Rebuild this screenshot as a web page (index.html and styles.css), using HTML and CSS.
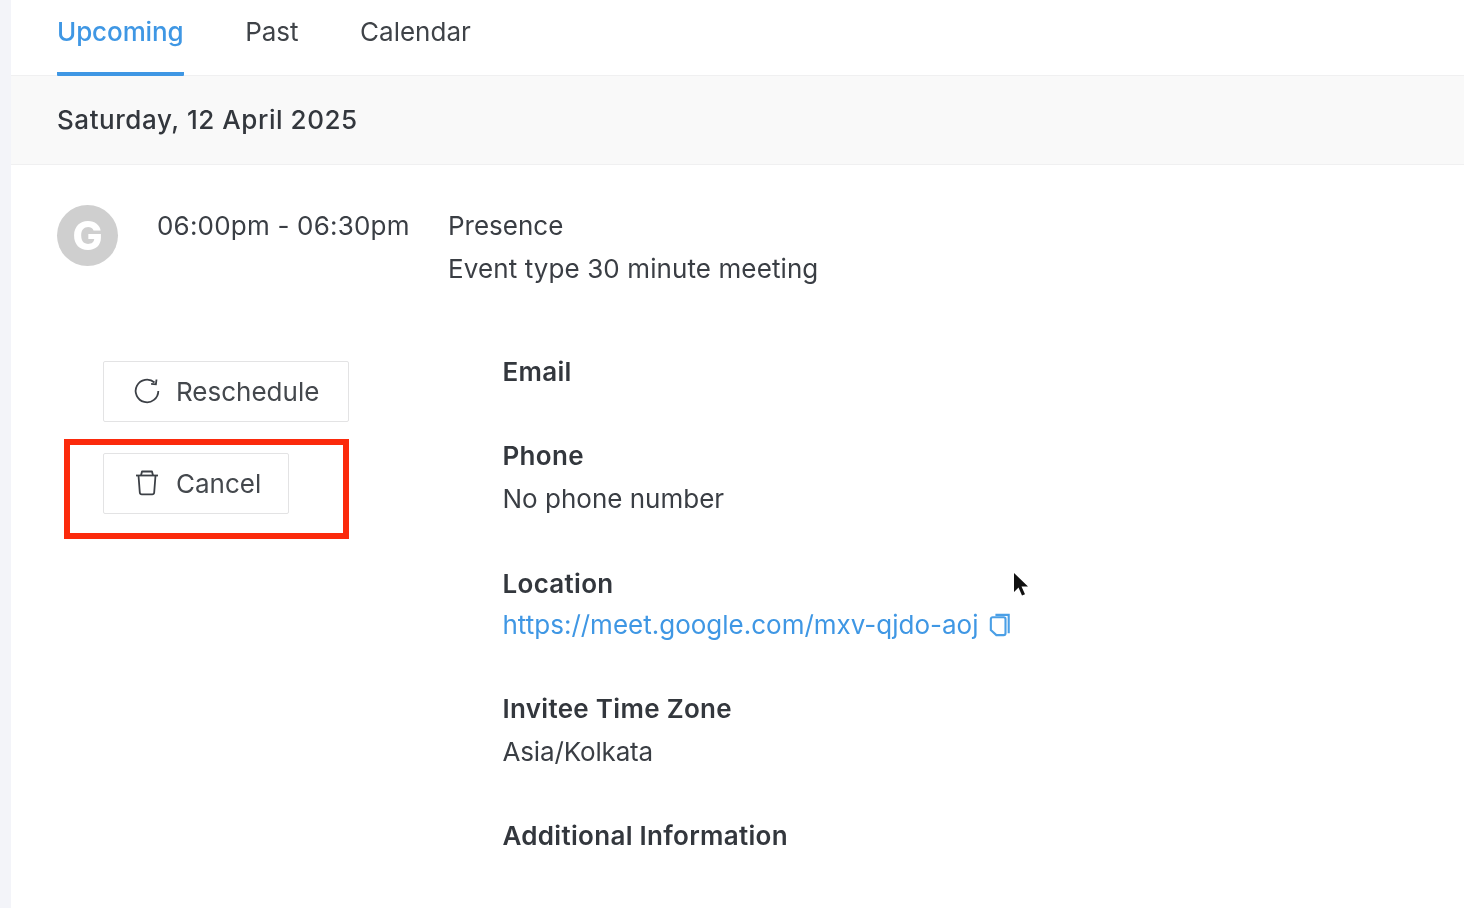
FILE: index.html
```html
<!DOCTYPE html>
<html lang="en">
<head>
<meta charset="utf-8">
<title>Upcoming events</title>
<link rel="stylesheet" href="styles.css">
</head>
<body>
<main class="panel">
  <nav class="tabs">
    <a class="tab tab-active">Upcoming</a>
    <a class="tab">Past</a>
    <a class="tab">Calendar</a>
  </nav>
  <div class="date-band">Saturday, 12 April 2025</div>
  <section class="event">
    <div class="avatar"><span>G</span></div>
    <div class="time">06:00pm - 06:30pm</div>
    <div class="summary">
      <div>Presence</div>
      <div class="event-type">Event type 30 minute meeting</div>
    </div>
  </section>
  <section class="details">
    <div class="actions">
      <button class="btn btn-wide">
        <svg class="btn-icon" viewBox="0 0 28 28" fill="none" stroke="#3c4046" stroke-width="1.8"><path d="M21.500 5.500A11.300 11.300 0 1 0 25.300 14"/><path d="M23.500 2.500l-.6 4.800-4.800-.5"/></svg>
        Reschedule
      </button>
      <button class="btn btn-narrow">
        <svg class="btn-icon" viewBox="0 0 28 28" fill="none" stroke="#3c4046" stroke-width="1.8" stroke-linejoin="round"><path d="M3 6.500h22"/><path d="M8 6.500l1-4h10l1 4"/><path d="M5.500 6.500l1.300 17a2 2 0 0 0 2 1.800h10.400a2 2 0 0 0 2-1.800l1.300-17"/></svg>
        Cancel
      </button>
      <div class="annotation"></div>
    </div>
    <div class="info">
      <div class="field field-email"><h4>Email</h4></div>
      <div class="field field-phone"><h4>Phone</h4><p>No phone number</p></div>
      <div class="field field-location">
        <h4>Location</h4>
        <p class="link-row"><a class="link">https://meet.google.com/mxv-qjdo-aoj</a>
          <svg class="copy" viewBox="0 0 24 26" fill="none" stroke="#4a9fe6" stroke-width="2.300"><path d="M7 2h14.500v20"/><path d="M2 6.500a2 2 0 0 1 2-2h12a2 2 0 0 1 2 2V22a2 2 0 0 1-2 2H8l-6-5.500z"/></svg>
        </p>
      </div>
      <div class="field field-zone"><h4>Invitee Time Zone</h4><p class="zone-value">Asia/Kolkata</p></div>
      <div class="field"><h4>Additional Information</h4></div>
    </div>
  </section>
  <svg class="cursor" viewBox="0 0 16 26"><path d="M1 1v19l4.500-4.500 3.500 8 3-1.300-3.500-7.700H15z" fill="#111"/></svg>
</main>
</body>
</html>
```

FILE: styles.css
```css
* { box-sizing: border-box; }
html, body { height: 100%; }
body {
  margin: 0;
  height: 908px;
  overflow: hidden;
  background: #f3f4f9;
  padding-left: 11px;
  font-family: Inter, "Liberation Sans", sans-serif;
  font-size: 26px;
  color: #3a3e44;
}
.panel {
  position: relative;
  height: 100%;
  background: #fff;
  overflow: hidden;
  filter: blur(0.45px);
}
.tabs {
  display: flex;
  gap: 61.5px;
  height: 76px;
  padding-left: 46px;
  border-bottom: 1px solid #f0f0f1;
}
.tab {
  height: 76px;
  line-height: 63px;
  color: #3f4348;
}
.tab-active {
  color: #3f97e4;
  font-weight: 500;
  letter-spacing: -0.1px;
  border-bottom: 4px solid #3f97e4;
  border-radius: 1px;
}
.date-band {
  height: 89px;
  padding-left: 46px;
  line-height: 88px;
  background: #f9f9f9;
  border-bottom: 1px solid #f0f0f1;
  font-weight: 500;
  letter-spacing: 0.55px;
  color: #33373d;
}
.event {
  display: flex;
  padding: 40px 0 0 46px;
  height: 196px;
}
.avatar {
  flex: none;
  width: 61px;
  height: 61px;
  border-radius: 50%;
  background: #cfcfcf;
  color: #fff;
  display: flex;
  align-items: center;
  justify-content: center;
  font-weight: 800;
  font-size: 40px;
}
.time {
  flex: none;
  width: 291px;
  margin-left: 39px;
  margin-top: -1px;
  line-height: 43px;
  letter-spacing: 0.2px;
}
.summary { line-height: 43px; margin-top: -1px; }
.event-type { letter-spacing: 0.1px; }
.details {
  display: flex;
}
.actions {
  position: relative;
  flex: none;
  width: 491.5px;
  padding-left: 92px;
}
.btn {
  display: flex;
  align-items: center;
  gap: 15px;
  height: 61px;
  padding: 0 0 1px 29px;
  margin-bottom: 31px;
  background: #fff;
  border: 1px solid #e3e3e4;
  border-radius: 2px;
  font: inherit;
  color: #44484d;
}
.btn-wide { width: 246px; }
.btn-narrow { width: 186px; }
.btn-icon { width: 28px; height: 28px; flex: none; }
.annotation {
  position: absolute;
  left: 53px;
  top: 78px;
  width: 285px;
  height: 100px;
  border: 6px solid #fb2a0c;
}
.info { flex: 1; margin-top: -9px; }
.field { margin: 0; }
.field h4 {
  margin: 0;
  font-size: 26px;
  font-weight: 600;
  letter-spacing: 0.3px;
  line-height: 40px;
  color: #33373d;
}
.field p { margin: 0; line-height: 46px; }
.field-email { height: 84px; }
.field-phone { height: 128px; }
.field-location { height: 125px; }
.field-zone { height: 127px; }
.field .link-row { display: flex; align-items: center; gap: 10px; line-height: 42px; }
.zone-value { letter-spacing: -0.15px; }
.link { color: #3f97e4; }
.copy { width: 22px; height: 26px; flex: none; }
.cursor {
  position: absolute;
  left: 1002px;
  top: 572px;
  width: 16px;
  height: 26px;
}
```
